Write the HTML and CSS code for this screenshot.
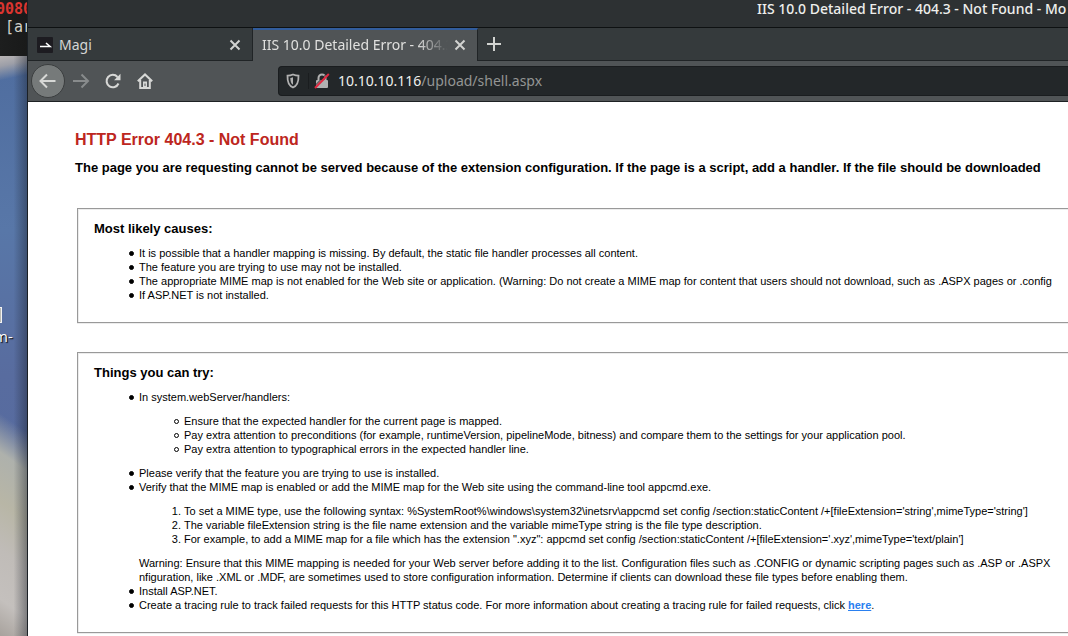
FILE: index.html
```html
<!DOCTYPE html>
<html lang="en">
<head>
<meta charset="utf-8">
<title>IIS 10.0 Detailed Error - 404.3 - Not Found</title>
<link rel="stylesheet" href="styles.css">
</head>
<body>
<div class="screen">
  <aside class="desktop">
    <div class="terminal">
      <div class="term-red">0080</div>
      <div class="term-line">[ar</div>
    </div>
    <div class="wallpaper">
      <div class="desk-icon"></div>
      <div class="desk-label">m-</div>
    </div>
  </aside>
  <div class="browser">
    <header class="titlebar">IIS 10.0 Detailed Error - 404.3 - Not Found - Mo</header>
    <nav class="tabs">
      <div class="tab">
        <svg class="favicon" width="16" height="16" viewBox="0 0 16 16"><rect width="16" height="16" rx="1" fill="#1d1c21"/><path d="M3 9.500H13L9 6" fill="none" stroke="#fff" stroke-width="1.600"/></svg>
        <span class="tab-title">Magi</span>
        <button class="close" aria-label="Close tab"><svg width="12" height="12" viewBox="0 0 12 12"><path d="M1.500 1.500l9 9M10.500 1.500l-9 9"/></svg></button>
      </div>
      <div class="tab active">
        <span class="tab-title fade">IIS 10.0 Detailed Error - 404.3</span>
        <button class="close" aria-label="Close tab"><svg width="12" height="12" viewBox="0 0 12 12"><path d="M1.500 1.500l9 9M10.500 1.500l-9 9"/></svg></button>
      </div>
      <button class="newtab" aria-label="New tab"><svg width="14" height="14" viewBox="0 0 14 14"><path d="M7 0v14M0 7h14"/></svg></button>
    </nav>
    <div class="toolbar">
      <button class="nav back" aria-label="Back"><svg width="18" height="16" viewBox="0 0 18 16"><path d="M16.500 8H2M8 1.500L1.500 8L8 14.500"/></svg></button>
      <button class="nav forward" aria-label="Forward"><svg width="18" height="16" viewBox="0 0 18 16"><path d="M1 8H15.500M9.500 1.500L16 8L9.500 14.500"/></svg></button>
      <button class="nav" aria-label="Reload"><svg width="16" height="16" viewBox="0 0 16 16"><path d="M13.500 10.500A6.200 6.200 0 1 1 12.500 4"/><path d="M15.500 .8V7.200H9.100Z" class="solid"/></svg></button>
      <button class="nav" aria-label="Home"><svg width="16" height="16" viewBox="0 0 16 16"><path d="M.8 8.200L8 1.400L15.200 8.200M3.200 7V15H12.800V7"/><path d="M6 15V8.500H10V15Z" class="solid"/><path d="M8 10.500v2.500" class="knob"/></svg></button>
      <div class="urlbar">
        <svg class="shield" width="14" height="16" viewBox="0 0 14 16"><path d="M7 1.500C5 2.300 3 2.600 1.500 2.600C1.300 8 2 12.500 7 14.500C12 12.500 12.700 8 12.500 2.600C11 2.600 9 2.300 7 1.500Z" fill="none" stroke="#b1b1b1" stroke-width="1.800"/><path d="M7 4.300Q5.500 4.900 4.300 5C4.400 8.500 5 10.500 7 11.700Z" fill="#b1b1b1"/></svg>
        <svg class="lock" width="16" height="16" viewBox="0 0 16 16"><path d="M4.500 7V5a3.500 3.500 0 0 1 7 0V7" fill="none" stroke="#b1b1b1" stroke-width="2"/><rect x="2" y="7" width="12" height="8" rx="1" fill="#b1b1b1"/><path d="M0 13.500L13 .5" stroke="#232729" stroke-width="1"/><path d="M1 15L14.800 1" stroke="#e22840" stroke-width="2"/></svg>
        <span class="url"><span class="host">10.10.10.116</span>/upload/shell.aspx</span>
      </div>
    </div>
    <main class="page">
      <h1>HTTP Error 404.3 - Not Found</h1>
      <h2>The page you are requesting cannot be served because of the extension configuration. If the page is a script, add a handler. If the file should be downloaded</h2>
      <section class="box">
        <h3>Most likely causes:</h3>
        <ul>
          <li>It is possible that a handler mapping is missing. By default, the static file handler processes all content.</li>
          <li>The feature you are trying to use may not be installed.</li>
          <li>The appropriate MIME map is not enabled for the Web site or application. (Warning: Do not create a MIME map for content that users should not download, such as .ASPX pages or .config</li>
          <li>If ASP.NET is not installed.</li>
        </ul>
      </section>
      <section class="box">
        <h3>Things you can try:</h3>
        <ul>
          <li>In system.webServer/handlers:
            <ul class="hollow">
              <li>Ensure that the expected handler for the current page is mapped.</li>
              <li>Pay extra attention to preconditions (for example, runtimeVersion, pipelineMode, bitness) and compare them to the settings for your application pool.</li>
              <li>Pay extra attention to typographical errors in the expected handler line.</li>
            </ul>
          </li>
          <li>Please verify that the feature you are trying to use is installed.</li>
          <li>Verify that the MIME map is enabled or add the MIME map for the Web site using the command-line tool appcmd.exe.
            <ol>
              <li>To set a MIME type, use the following syntax: %SystemRoot%\windows\system32\inetsrv\appcmd set config /section:staticContent /+[fileExtension='string',mimeType='string']</li>
              <li>The variable fileExtension string is the file name extension and the variable mimeType string is the file type description.</li>
              <li>For example, to add a MIME map for a file which has the extension ".xyz": appcmd set config /section:staticContent /+[fileExtension='.xyz',mimeType='text/plain']</li>
            </ol>
            Warning: Ensure that this MIME mapping is needed for your Web server before adding it to the list. Configuration files such as .CONFIG or dynamic scripting pages such as .ASP or .ASPX<br>nfiguration, like .XML or .MDF, are sometimes used to store configuration information. Determine if clients can download these file types before enabling them.
          </li>
          <li>Install ASP.NET.</li>
          <li>Create a tracing rule to track failed requests for this HTTP status code. For more information about creating a tracing rule for failed requests, click <a href="#trace">here</a>.</li>
        </ul>
      </section>
    </main>
  </div>
</div>
</body>
</html>
```
FILE: styles.css
```css
*, *::before { box-sizing: border-box; }
body { margin: 0; background: #fff; }
button { border: 0; padding: 0; background: none; }
svg { display: block; flex: none; }

.screen {
  display: grid;
  grid-template-columns: 27px minmax(0, 1fr);
  height: 100vh;
  overflow: hidden;
}

/* desktop visible left of the window */
.desktop { display: flex; flex-direction: column; overflow: hidden; }
.terminal {
  height: 56px;
  background: linear-gradient(90deg, #1d1e1e, #191a1a);
  font: 15px/18px "DejaVu Sans Mono", monospace;
  color: #d0d0ca;
  overflow: hidden;
}
.term-red { color: #dc3530; font-weight: bold; margin-left: -4px; }
.term-line { margin-left: 5px; }
.wallpaper {
  flex: 1;
  padding-top: 251px;
  background:
    linear-gradient(90deg, rgba(20, 25, 35, 0) 50%, rgba(20, 25, 35, .4)),
    linear-gradient(168deg, #b9b5b5 0, #9d9fa8 10px, rgba(90, 110, 155, 0) 24px),
    linear-gradient(215deg, rgba(174, 177, 172, 0) 308px, #aeb1ac 340px, #b8b6a6 380px, #c0bcb8 420px, #c4c0bd 460px, #a8a29d),
    linear-gradient(#4f6d9f, #5877a8 30%, #586c9f 55%, #5469a0);
}
.desk-icon { width: 2px; height: 16px; background: #b9b9b3; border: solid #f4f4f4; border-width: 1px 1px 1px 0; }
.desk-label {
  margin: 4px 0 0 -6px;
  font: 15px/18px "Open Sans", sans-serif;
  color: #fff;
  text-shadow: 1px 1px 1px #000;
}

/* window */
.browser {
  display: flex;
  flex-direction: column;
  min-width: 0;
  border-left: 1px solid #1b2025;
  font: 14px/20px "Noto Sans", sans-serif;
  color: #d6d6d4;
  overflow: hidden;
  white-space: nowrap;
}
.titlebar {
  flex: none;
  height: 28px;
  padding-left: 729px;
  line-height: 18px;
  font-weight: 500;
  color: #eeeeec;
  background: #2d3133;
  border-bottom: 1px solid #0e1112;
}
.tabs {
  flex: none;
  display: flex;
  height: 33px;
  background: #353a3c;
  border-bottom: 1px solid #202426;
}
.tab {
  display: flex;
  align-items: center;
  width: 225px;
  height: 32px;
  padding: 2px 11px 0 9px;
  gap: 6px;
  border-right: 1px solid #202426;
}
.tab.active {
  height: 33px;
  padding: 0 11px 1px 9px;
  background: #505456;
  border-top: 2px solid #315c9c;
  color: #e0e0de;
}
.tab-title { flex: 1; min-width: 0; overflow: hidden; }
.fade { mask-image: linear-gradient(90deg, #000 155px, transparent 186px); }
.close svg, .newtab svg { fill: none; stroke: #d2d3d1; stroke-width: 2; }
.newtab { padding: 0 9px; }

.toolbar {
  flex: none;
  display: flex;
  align-items: center;
  height: 41px;
  padding-left: 3px;
  background: #505456;
  border-bottom: 1px solid #1d2123;
}
.nav { width: 32px; height: 32px; display: grid; place-items: center; }
.nav svg { fill: none; stroke: #d7d8d6; stroke-width: 2; }
.nav .solid { fill: #d7d8d6; stroke: none; }
.nav .knob { stroke: #505456; stroke-width: 1; }
.nav.back { width: 34px; height: 34px; border: 1px solid #3b3e3f; border-radius: 50%; background: #767a7a; }
.nav.forward svg { stroke: #888b8c; }
.urlbar {
  flex: 1;
  display: flex;
  align-items: center;
  height: 30px;
  margin-left: 117px;
  padding-left: 7px;
  background: #232729;
  border: 1px solid #1a1d1f;
  border-right: 0;
  border-radius: 4px 0 0 4px;
}
.lock { margin: 0 8px 0 14px; }
.shield { box-shadow: 8px 0 0 #232729, 9px 0 0 #1a1d1f; }
.url { color: #939594; }
.host { color: #f0f0ee; }

/* error document */
.page {
  flex: 1;
  padding: 29px 0 0 47px;
  background: #fff;
  color: #000;
  font: 11px/14px "Liberation Sans", Arial, sans-serif;
  overflow: hidden;
}
h1 { margin: 0 0 11px; font-size: 16px; line-height: 18px; color: #bd2620; }
h2 { margin: 0 0 33px; font-size: 13px; line-height: 15px; }
h3 { margin: 0 0 10px; font-size: 13px; line-height: 15px; }
.box {
  margin: 0 0 29px 2px;
  padding: 12px 0 20px 16px;
  border: 1px solid #999;
  border-right: 0;
  box-shadow: inset 1px 1px 0 #ececec, 0 1px 0 #ececec;
}
.page ul, .page ol { margin: 0; padding-left: 45px; }
.page li ul, .page li ol { margin: 10px 0; }
.page ul { list-style: none; }
.page ul > li::before {
  content: "";
  display: inline-block;
  width: 5px;
  height: 5px;
  margin: 0 5px 1px -10px;
  border: 1px solid #000;
  border-radius: 50%;
  background: #000;
}
.page .hollow > li::before { background: none; }
a { color: #2a80f0; font-weight: bold; }
```
